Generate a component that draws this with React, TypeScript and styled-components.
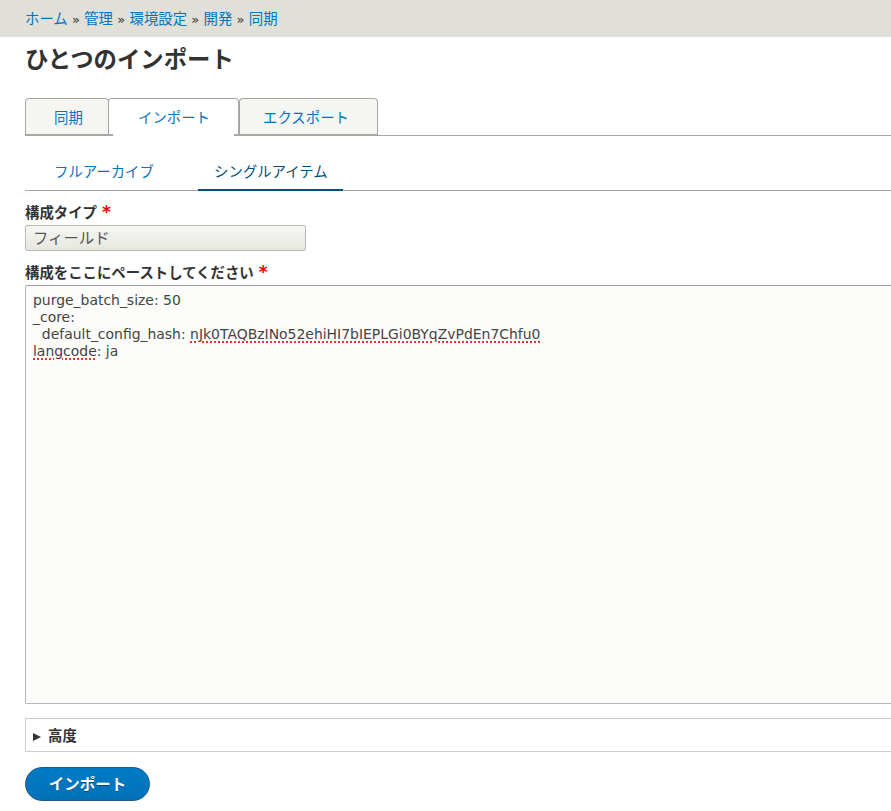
import React from "react";
import styled, { createGlobalStyle } from "styled-components";

const FONT = `"DejaVu Sans", "Noto Sans CJK JP", sans-serif`;

const crumbs = ["ホーム", "管理", "環境設定", "開発", "同期"];

function App() {
  return (
    <Page>
      <GlobalStyle />
      <Breadcrumb>
        {crumbs.map((c, i) => (
          <React.Fragment key={c}>
            {i > 0 && <Sep>»</Sep>}
            <Crumb href="#">{c}</Crumb>
          </React.Fragment>
        ))}
      </Breadcrumb>
      <Content>
        <Title>ひとつのインポート</Title>
        <PrimaryTabs>
          <PrimaryTab $w={84} $pad={29}>
            同期
          </PrimaryTab>
          <PrimaryTab $w={131} $pad={30} $active>
            インポート
          </PrimaryTab>
          <PrimaryTab $w={139} $pad={24}>
            エクスポート
          </PrimaryTab>
        </PrimaryTabs>
        <SecondaryTabs>
          <SecondaryTab $w={173}>フルアーカイブ</SecondaryTab>
          <SecondaryTab $w={145} $active>
            シングルアイテム
          </SecondaryTab>
        </SecondaryTabs>
        <Label>
          構成タイプ <Req>*</Req>
        </Label>
        <Select>フィールド</Select>
        <PasteLabel>
          構成をここにペーストしてください <Req>*</Req>
        </PasteLabel>
        <PasteArea>
          <div>purge_batch_size: 50</div>
          <div>_core:</div>
          <div>
            {"  default_config_hash: "}
            <Misspelled>nJk0TAQBzINo52ehiHI7bIEPLGi0BYqZvPdEn7Chfu0</Misspelled>
          </div>
          <div>
            <Misspelled>langcode</Misspelled>: ja
          </div>
        </PasteArea>
        <Details>
          <Arrow>
            <svg width="8" height="8" viewBox="0 0 8 8">
              <path d="M0 0L8 4L0 8Z" fill="#333" />
            </svg>
          </Arrow>
          高度
        </Details>
        <SubmitButton>インポート</SubmitButton>
      </Content>
    </Page>
  );
}

export default App;

const GlobalStyle = createGlobalStyle`
  html, body {
    margin: 0;
    padding: 0;
    background: #fff;
  }
  body {
    font-family: ${FONT};
    font-size: 14.4px;
    color: #333;
  }
`;

const Page = styled.div`
  width: 891px;
  height: 811px;
  overflow: hidden;
`;

const Breadcrumb = styled.div`
  height: 37px;
  box-sizing: border-box;
  padding: 10px 25px 0;
  background: #e0e0d8;
  font-size: 14.4px;
  line-height: 18px;
  white-space: nowrap;
`;

const Crumb = styled.a`
  color: #0074bd;
  text-decoration: none;
`;

const Sep = styled.span`
  color: #333;
  margin: 0 4.25px;
  font-size: 13px;
`;

const Content = styled.div`
  padding-left: 25px;
`;

const Title = styled.h1`
  margin: 8px 0 0;
  font-size: 23.4px;
  line-height: 30px;
  font-weight: 700;
  color: #333;
`;

const PrimaryTabs = styled.div`
  display: flex;
  height: 37px;
  margin-top: 23px;
  border-bottom: 1px solid #a6a6a6;
`;

const PrimaryTab = styled.div<{ $w: number; $pad: number; $active?: boolean }>`
  position: relative;
  z-index: ${(p) => (p.$active ? 1 : 0)};
  width: ${(p) => p.$w}px;
  height: 38px;
  flex-shrink: 0;
  box-sizing: border-box;
  margin-right: ${(p) => (p.$active ? 0 : -1)}px;
  padding: 10px 0 0 ${(p) => p.$pad - 1}px;
  font-size: 14.4px;
  line-height: 18px;
  white-space: nowrap;
  color: #0074bd;
  background: ${(p) => (p.$active ? "#fff" : "#f5f5f2")};
  border: 1px solid #a6a6a6;
  border-bottom-width: 2px;
  border-radius: 4px 4px 0 0;

  &::after {
    content: "";
    display: ${(p) => (p.$active ? "block" : "none")};
    position: absolute;
    left: 4px;
    right: 4px;
    bottom: -2px;
    height: 2px;
    background: #fff;
  }
`;

const SecondaryTabs = styled.div`
  display: flex;
  height: 54px;
  border-bottom: 1px solid #a6a6a6;
`;

const SecondaryTab = styled.div<{ $w: number; $active?: boolean }>`
  width: ${(p) => p.$w}px;
  height: 55px;
  box-sizing: border-box;
  padding-top: 27px;
  padding-left: ${(p) => (p.$active ? 16 : 29)}px;
  font-size: 14.4px;
  line-height: 18px;
  color: ${(p) => (p.$active ? "#004f80" : "#0074bd")};
  border-bottom: ${(p) => (p.$active ? "2px solid #004f80" : "0")};
`;

const Label = styled.div`
  margin-top: 12px;
  font-size: 14.4px;
  font-weight: 700;
  line-height: 18px;
  color: #333;
`;

const PasteLabel = styled(Label)`
  margin-top: 12px;
`;

const Req = styled.span`
  color: #e00;
  font-size: 17px;
`;

const Select = styled.div`
  width: 281px;
  height: 26px;
  box-sizing: border-box;
  margin-top: 3px;
  padding: 1px 0 0 7px;
  font-size: 15.4px;
  line-height: 24px;
  color: #555;
  background: linear-gradient(#f6f6f3, #e7e7df);
  border: 1px solid #b8b8b8;
  border-radius: 2px;
`;

const PasteArea = styled.div`
  width: 880px;
  height: 419px;
  box-sizing: border-box;
  margin-top: 3px;
  padding: 6px 7px;
  font-size: 13.95px;
  line-height: 17px;
  white-space: pre;
  color: #444;
  background: #fcfcfa;
  border: 1px solid #b8b8b8;
  border-top-color: #a0a0a0;
  border-radius: 2px;
`;

const Misspelled = styled.span`
  text-decoration: underline dotted #e33;
  text-decoration-thickness: 2px;
  text-underline-offset: 2px;
`;

const Details = styled.div`
  display: flex;
  align-items: center;
  width: 880px;
  height: 34px;
  box-sizing: border-box;
  margin-top: 14px;
  padding: 0 0 2px 7px;
  font-size: 14.4px;
  font-weight: 700;
  color: #333;
  border: 1px solid #ccc;
`;

const Arrow = styled.span`
  display: flex;
  margin: 5px 7px 0 0;
`;

const SubmitButton = styled.button`
  display: block;
  width: 125px;
  height: 34px;
  margin-top: 15px;
  padding: 0 0 2px;
  font-family: ${FONT};
  font-size: 15.5px;
  font-weight: 700;
  color: #fff;
  text-shadow: 0 1px 0 rgba(0, 0, 0, 0.4);
  background: linear-gradient(#007bc6, #0071b8);
  border: 1px solid #1e5c90;
  border-radius: 20em;
`;
